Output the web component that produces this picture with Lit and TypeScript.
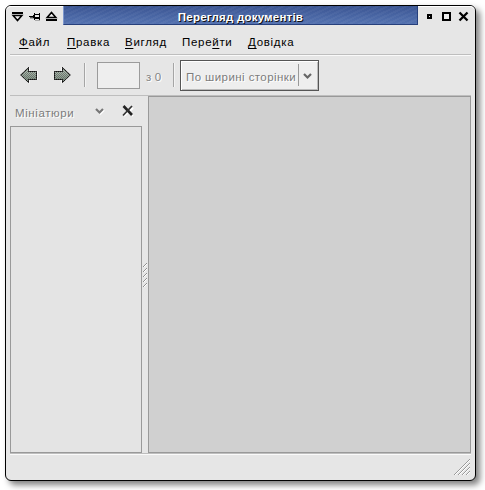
import { LitElement, html, css, svg } from "lit";
import { customElement } from "lit/decorators.js";

const menu = [
  ["", "Ф", "айл"],
  ["", "П", "равка"],
  ["", "В", "игляд"],
  ["Пере", "й", "ти"],
  ["", "Д", "овідка"],
];

const arrow = svg`
  <path d="M1 9 L9 1 V5 H17 V14 H9 V18 Z" fill="#fff" opacity=".7" transform="translate(1 0)"/>
  <path d="M.8 9 L8.5 1.5 V5.5 H16.5 V13.5 H8.5 V16.5 Z" fill="url(#shade)"/>
  <path d="M.8 9 L8.5 1.5 V5.5 H16.5 V13.5 H8.5 V16.5 Z" fill="url(#dots)" stroke="#444"/>
  <path d="M.8 9 L8.5 1.5 V5.5 H16.5 V13.5 H8.5 V16.5 Z" fill="none" stroke="#000" stroke-dasharray="1 1"/>`;

const dots = svg`<defs><linearGradient id="shade" x2="0" y2="1"><stop stop-color="#c3cdc4"/><stop offset="1" stop-color="#78887b"/></linearGradient>
<pattern id="dots" width="2" height="2" patternUnits="userSpaceOnUse">
  <rect width="1" height="1" fill="#4c574e" opacity=".6"/><rect x="1" y="1" width="1" height="1" fill="#4c574e" opacity=".6"/>
</pattern></defs>`;

@customElement("app-root")
export class AppRoot extends LitElement {
  static styles = css`
    :host { display: block; box-sizing: border-box; width: 485px; height: 490px; padding: 5px; background: #fff; overflow: hidden;
      font: 11.5px "Liberation Sans", Arial, sans-serif; color: #000; cursor: default; }
    * { box-sizing: border-box; }
    svg { display: block; flex: none; }
    .window { width: 471px; height: 476px; border: 1px solid #000; border-radius: 6px; background: #e6e6e6;
      box-shadow: 4px 4px 6px rgba(0,0,0,.5); display: flex; flex-direction: column; white-space: nowrap; }
    .title { height: 19px; flex: none; display: flex; box-shadow: inset 0 1px #fff; border-radius: 5px 5px 0 0; }
    .caption { width: 355px; height: 19px; border-bottom: 1px solid #27407c; border-right: 1px solid #27407c; border-left: 1px solid #7d96cc;
      background: repeating-linear-gradient(155deg, rgba(255,255,255,.04) 0 2px, transparent 2px 4px), linear-gradient(#3b5592, #45619f 40%, #5472b0);
      color: #fff; font-weight: bold; line-height: 22px; text-align: center; text-shadow: 1px 1px #111; }
    .caption span { letter-spacing: .22px; }
    .menu { height: 29px; flex: none; display: grid; grid-template-columns: 48px 58px 57px 66px 60px; padding-left: 13px; line-height: 34px; }
    .menu u { text-underline-offset: 2px; text-decoration-thickness: 1px; text-decoration-skip-ink: none; }
    .menu span { letter-spacing: .7px; }
    .rule { height: 2px; flex: none; margin: 0 4px; background: linear-gradient(#bebebe 50%, #fafafa 50%); }
    .tools { height: 39px; flex: none; display: flex; align-items: flex-start; margin-left: 4px; color: #858585; text-shadow: 1px 1px #fff; }
    .back { margin: 10px 0 0 10px; }
    .forward { margin: 10px 0 0 16px; }
    .sep { width: 2px; height: 24px; margin-top: 7px; background: linear-gradient(90deg, #a5a5a5 50%, #f3f3f3 50%); }
    .s1 { margin-left: 12px; }
    .page { width: 43px; height: 27px; margin: 6px 0 0 11px; border: 1px solid #9b9b9b; background: #eee; }
    .of { width: 27px; margin-left: 6px; line-height: 43px; letter-spacing: .2px; }
    .combo { width: 139px; height: 31px; margin: 4px 0 0 5px; border: 1px solid #555; background: #eee; display: flex; padding-left: 5px;
      box-shadow: inset 1px 1px #fff, inset -1px -1px #bbb; line-height: 33px; color: #7c7c7c; }
    .combo span { width: 112px; letter-spacing: .42px; }
    .combo i { width: 1px; height: 22px; margin-top: 3px; background: #999; }
    .combo svg { margin: 12px 0 0 4px; }
    .main { height: 358px; flex: none; display: flex; margin: 0 4px; border-top: 1px solid #bebebe; }
    .side { width: 132px; display: flex; flex-direction: column; }
    .head { height: 30px; display: flex; padding-left: 5px; color: #7c7c7c; text-shadow: 1px 1px #fff; line-height: 34px; }
    .head span { width: 79px; letter-spacing: .6px; }
    .head .chev { margin-top: 12px; }
    .head .x { margin: 9px 0 0 16px; }
    .list { height: 327px; border: 1px solid #999; background: #e4e4e4; }
    .grip { width: 6px; padding-top: 167px; }
    .doc { width: 323px; height: 357px; border: 1px solid #999; background: #d0d0d0; }
    .status { flex: 1; display: flex; justify-content: flex-end; padding: 3px 4px 0 0; }
  `;

  render() {
    return html`<div class="window">
      <div class="title">
        <svg width="57" height="19" viewBox="6 6 57 19">
          <path d="M12 12h11v2h-11z M46 19h11v2h-11z"/>
          <path d="M13.2 15.5H21.8L17.5 20.5Z M47.2 17.5H55.8L51.5 12.5Z" fill="#eee" stroke="#000" stroke-width="1.6"/>
          <path d="M29 16h5v1h-5z M34 13h1v7h-1z M35 14h4v1h-4z M35 17h4v2h-4z M39 13h1v7h-1z M33 15h1v3h-1z"/>
          <path d="M30 17h3v1h-3z" fill="#555"/>
          <path d="M30 18h4v1h-4z M35 20h5v1h-5z" fill="#aaa"/>
        </svg>
        <div class="caption"><span>Перегляд документів</span></div>
        <svg width="57" height="19" viewBox="418 6 57 19">
          <path d="M428 15h3v3h-3z M443 13h7v7h-7z" fill="#eee" stroke="#000" stroke-width="2"/>
          <path d="M459.5 12.5L467.5 20.5M467.5 12.5L459.5 20.5" stroke="#000" stroke-width="2.3"/>
        </svg>
      </div>
      <div class="menu">${menu.map(([a, b, c]) => html`<span>${a}<u>${b}</u>${c}</span>`)}</div>
      <div class="rule"></div>
      <div class="tools">
        <svg class="back" width="18" height="19">${dots}${arrow}</svg>
        <svg class="forward" width="18" height="19">${dots}<g transform="translate(17 0) scale(-1 1)">${arrow}</g></svg>
        <div class="sep s1"></div>
        <div class="page"></div>
        <div class="of">з 0</div>
        <div class="sep"></div>
        <div class="combo"><span>По ширині сторінки</span><i></i>
          <svg width="10" height="7"><path d="M1 1L4.5 4.5L8 1" fill="none" stroke="#666" stroke-width="2.2"/></svg>
        </div>
      </div>
      <div class="main">
        <div class="side">
          <div class="head"><span>Мініатюри</span>
            <svg class="chev" width="12" height="7"><path d="M3 2L6.5 5.5L10 2" fill="none" stroke="#fff" stroke-width="2"/><path d="M2 1L5.5 4.5L9 1" fill="none" stroke="#777" stroke-width="2.2"/></svg>
            <svg class="x" width="13" height="12"><path d="M3 3L11 11M11 3L2 11" stroke="#fff" stroke-width="2"/><path d="M1.5 1L10 10" stroke="#222" stroke-width="2.6"/><path d="M10 1L1 10.5" stroke="#333" stroke-width="1.7"/></svg>
          </div>
          <div class="list"></div>
        </div>
        <div class="grip"><svg width="6" height="26" shape-rendering="crispEdges">
          ${[0, 5, 10, 15, 20].map((y) => svg`<path d=${`M1 ${y + 3}h1v1h-1z M2 ${y + 2}h1v1h-1z M3 ${y + 1}h1v1h-1z M4 ${y}h1v1h-1z`} fill="#909090"/><path d=${`M2 ${y + 3}h1v1h-1z M3 ${y + 2}h1v1h-1z M4 ${y + 1}h1v1h-1z`} fill="#fff"/>`)}
        </svg></div>
        <div class="doc"></div>
      </div>
      <div class="rule"></div>
      <div class="status"><svg width="17" height="18">
        ${[0, 4, 8, 12].map((n) => svg`<path d=${`M${n} 17L16 ${n + 1}`} stroke="#999"/><path d=${`M${n + 1} 17L16 ${n + 2}`} stroke="#fff"/>`)}
      </svg></div>
    </div>`;
  }
}
